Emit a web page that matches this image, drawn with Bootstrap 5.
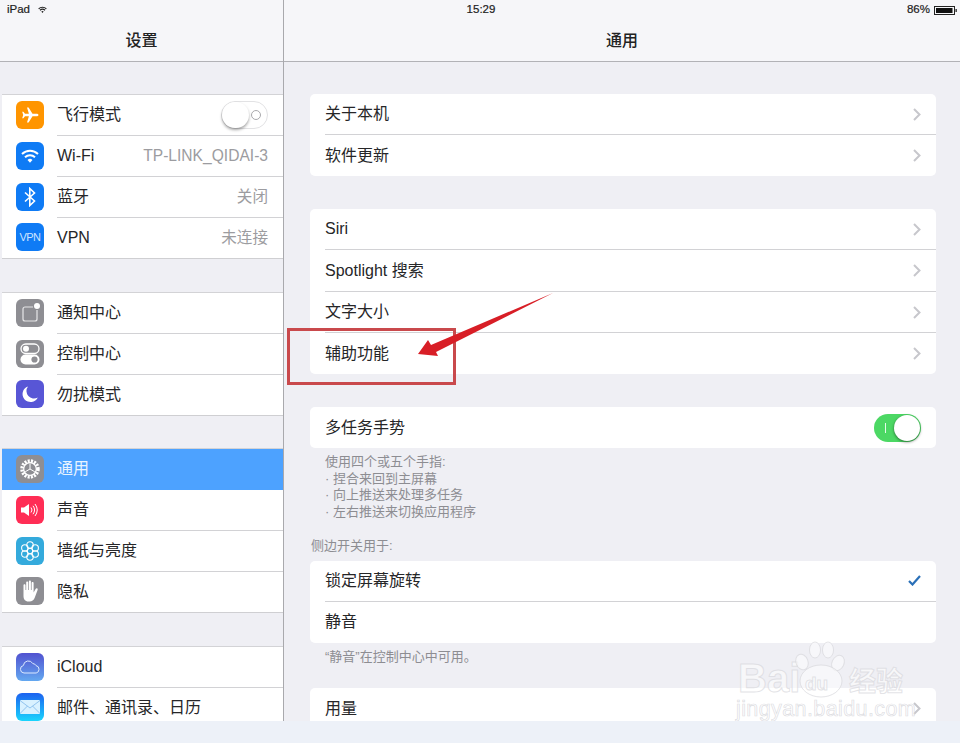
<!DOCTYPE html>
<html lang="zh-CN">
<head>
<meta charset="UTF-8">
<title>设置 - 通用</title>
<link href="https://cdn.jsdelivr.net/npm/bootstrap@5.3.0/dist/css/bootstrap.min.css" rel="stylesheet">
<style>
body { background: #edf1f8; font-family: "Liberation Sans", "Noto Sans CJK SC", sans-serif; color: #262628; overflow: hidden; }
.ipad { height: 721px; background: #efeff4; overflow: hidden; }
.status-bar { height: 20px; font-size: 11.5px; color: #222; padding: 0 3px 0 7px; z-index: 3; -webkit-text-stroke: .2px #222; }
.status-mid { left: 2px; right: 0; text-align: center; }
.side-pane { width: 284px; border-right: 1px solid #a9a9ad; }
.nav-head { height: 62px; background: #f6f6f9; border-bottom: 1px solid #b2b2b6; padding-top: 20px; font-size: 16px; font-weight: 500; color: #222; }
.side-list { padding: 0 0 0 2px; }
.set-group { margin-top: 32px; margin-bottom: 33px; background: #fff; border-top: 1px solid #d3d3d6; border-bottom: 1px solid #cfcfd2; }
.tight-gap { margin-bottom: 32px; }
.set-row { height: 41px; font-size: 16px; padding-left: 14px; }
.set-row:last-child { height: 40px; }
.set-icon { width: 28px; height: 28px; border-radius: 6px; flex: none; margin: 0 13px 2px 0; }
.vpn-icon { background: #0f7bf5; color: #cfe5ff; font-size: 11px; letter-spacing: -.5px; }
.set-text { height: 100%; border-bottom: 1px solid #d2d2d5; padding: 0 15px 1px 0; }
.set-row:last-child .set-text { border-bottom: 0; }
.set-val { color: #9c9ca0; font-size: 15.6px; }
.set-row.active-row { background: #4da2ff; color: #e8f3ff; }
.set-row.active-row .set-text { border-bottom: 0; }
.toggle-off, .toggle-on { width: 47px; height: 28px; border-radius: 14px; }
.toggle-off { border: 1px solid #e2e2e4; background: #fff; }
.toggle-off i { position: absolute; left: 0; top: 0; width: 27px; height: 26px; border-radius: 13px; background: #fff; box-shadow: 0 2px 3px rgba(0,0,0,.35); }
.toggle-off b { position: absolute; right: 6px; top: 8px; width: 10px; height: 10px; border-radius: 50%; border: 1px solid #a9a9ac; }
.toggle-on { background: #4cd864; }
.toggle-on i { position: absolute; right: 1px; top: 1px; width: 26px; height: 26px; border-radius: 50%; background: #fff; box-shadow: 0 1px 3px rgba(0,0,0,.5); }
.toggle-on b { position: absolute; left: 11px; top: 9px; width: 1px; height: 10px; background: #e6fbe9; }
.main-list { padding: 32px 24px 0 26px; }
.card-group-ios { background: #fff; border-radius: 5px; margin-bottom: 33px; }
.ios-row { height: 41px; font-size: 16px; padding-left: 15px; }
.ios-row-tall { height: 42px; }
.ios-body { height: 100%; padding-right: 15px; border-bottom: 1px solid #d2d2d5; }
.ios-row:last-child .ios-body { border-bottom: 0; }
.foot-note { font-size: 13px; line-height: 16.7px; color: #8d8d92; padding-left: 15px; margin: -32px 0 0; padding-top: 5px; }
.side-label { font-size: 13px; line-height: 16.7px; color: #8d8d92; margin: 17px 0 6px 1px; }
.tail-note { margin-top: -27px; margin-bottom: 23px; padding-top: 0; }
.red-box { left: 287px; top: 328px; width: 169px; height: 57px; border: 3px solid #c9494c; z-index: 4; }
.arrow-layer { left: 400px; top: 280px; z-index: 5; }
.water { left: 735px; top: 640px; width: 180px; height: 80px; z-index: 6; color: rgba(255,255,255,.5); -webkit-text-stroke: 1px rgba(215,215,220,.7); }
.water-bai { left: 3px; top: 17px; font: 700 40px/42px "Liberation Sans", sans-serif; }
.water-paw { left: 58px; top: 0; }
.water-du { left: 70px; top: 33px; font: 700 19px/22px "Liberation Sans", sans-serif; }
.water-jy { left: 114px; top: 24px; font: 700 27px/32px "Noto Sans CJK SC", sans-serif; }
.water-url { left: 1px; top: 59px; font: 400 21.5px/20px "Liberation Sans", sans-serif; letter-spacing: .4px; -webkit-text-stroke: .7px rgba(210,210,215,.75); }
</style>
</head>
<body>
<div class="ipad position-relative d-flex">

  <div class="status-bar position-absolute top-0 start-0 w-100 d-flex align-items-center justify-content-between">
    <div class="d-flex align-items-center gap-2">
      <span>iPad</span>
      <svg width="9" height="8" viewBox="0 0 10 8" fill="none" stroke="#222" stroke-width="1.3"><path d="M.7 2.800a6 6 0 0 1 8.600 0M2.200 4.300a4 4 0 0 1 5.600 0"/><path d="M3.700 5.800a1.900 1.900 0 0 1 2.600 0L5 7.300z" fill="#222" stroke="none"/></svg>
    </div>
    <div class="status-mid position-absolute">15:29</div>
    <div class="d-flex align-items-center gap-1">
      <span>86%</span>
      <svg width="23" height="9" viewBox="0 0 23 9"><rect x=".5" y=".5" width="20" height="8" fill="none" stroke="#222"/><rect x="2" y="2" width="16.500" height="5" fill="#111"/><rect x="21.500" y="3" width="1.300" height="3" fill="#222"/></svg>
    </div>
  </div>

  <aside class="side-pane flex-shrink-0 d-flex flex-column">
    <div class="nav-head flex-shrink-0 d-flex align-items-center justify-content-center">设置</div>
    <div class="side-list">
      <div class="set-group">
        <div class="set-row d-flex align-items-center">
          <span class="set-icon d-flex align-items-center justify-content-center" style="background:#ff9500">
            <svg width="20" height="20" viewBox="0 0 20 20" fill="#fff"><path d="M18.500 10c0-.8-1-1.300-2.200-1.300h-3.800L8.600 2.500H7l1.900 6.200H5L3.400 6.800H2.200L3.200 10l-1 3.200h1.200L5 11.300h3.900L7 17.500h1.600l3.900-6.200h3.800c1.200 0 2.200-.5 2.200-1.300z"/></svg>
          </span>
          <div class="set-text flex-fill d-flex align-items-center justify-content-between">
            <span>飞行模式</span>
            <span class="toggle-off position-relative d-block"><i></i><b></b></span>
          </div>
        </div>
        <div class="set-row d-flex align-items-center">
          <span class="set-icon d-flex align-items-center justify-content-center" style="background:#0f7bf5">
            <svg width="20" height="16" viewBox="0 0 20 16" fill="none" stroke="#fff" stroke-width="2"><path d="M2 6a11.500 11.500 0 0 1 16 0M5 9.200a7.200 7.200 0 0 1 10 0"/><path d="M7.500 12a3.600 3.600 0 0 1 5 0L10 14.800z" fill="#fff" stroke="none"/></svg>
          </span>
          <div class="set-text flex-fill d-flex align-items-center justify-content-between">
            <span>Wi-Fi</span><span class="set-val">TP-LINK_QIDAI-3</span>
          </div>
        </div>
        <div class="set-row d-flex align-items-center">
          <span class="set-icon d-flex align-items-center justify-content-center" style="background:#0f7bf5">
            <svg width="12" height="20" viewBox="0 0 12 20" fill="none" stroke="#fff" stroke-width="1.600"><path d="M1 5.500 10.500 14 5.800 18.500v-17L10.500 6 1 14.500"/></svg>
          </span>
          <div class="set-text flex-fill d-flex align-items-center justify-content-between">
            <span>蓝牙</span><span class="set-val">关闭</span>
          </div>
        </div>
        <div class="set-row d-flex align-items-center">
          <span class="set-icon vpn-icon d-flex align-items-center justify-content-center">VPN</span>
          <div class="set-text flex-fill d-flex align-items-center justify-content-between">
            <span>VPN</span><span class="set-val">未连接</span>
          </div>
        </div>
      </div>

      <div class="set-group tight-gap">
        <div class="set-row d-flex align-items-center">
          <span class="set-icon d-flex align-items-center justify-content-center" style="background:#8e8e93">
            <svg width="24" height="24" viewBox="0 0 24 24" fill="none"><path d="M15 6H7a2 2 0 0 0-2 2v10a2 2 0 0 0 2 2h10a2 2 0 0 0 2-2V9" stroke="#e6e6e8" stroke-width="1.200"/><circle cx="19" cy="5" r="3" fill="#fff"/></svg>
          </span>
          <div class="set-text flex-fill d-flex align-items-center"><span>通知中心</span></div>
        </div>
        <div class="set-row d-flex align-items-center">
          <span class="set-icon d-flex align-items-center justify-content-center" style="background:#8e8e93">
            <svg width="22" height="24" viewBox="0 0 22 24"><rect x="2" y="2" width="18" height="9.500" rx="4.700" fill="none" stroke="#fff" stroke-width="1.300"/><circle cx="7" cy="6.700" r="3" fill="#fff"/><rect x="1.500" y="12.500" width="19" height="10" rx="5" fill="#fff"/><circle cx="15.500" cy="17.500" r="3.100" fill="#8e8e93"/></svg>
          </span>
          <div class="set-text flex-fill d-flex align-items-center"><span>控制中心</span></div>
        </div>
        <div class="set-row d-flex align-items-center">
          <span class="set-icon d-flex align-items-center justify-content-center" style="background:#5856d6">
            <svg width="18" height="18" viewBox="0 0 18 18" fill="#fff"><path d="M7 1.500a8 8 0 1 0 9.800 11A7.500 7.500 0 0 1 7 1.500z"/></svg>
          </span>
          <div class="set-text flex-fill d-flex align-items-center"><span>勿扰模式</span></div>
        </div>
      </div>

      <div class="set-group">
        <div class="set-row active-row d-flex align-items-center">
          <span class="set-icon d-flex align-items-center justify-content-center" style="background:#8e8e93">
            <svg width="22" height="22" viewBox="0 0 22 22" fill="none" stroke="#fff"><circle cx="11" cy="11" r="8" stroke-width="3.500" stroke-dasharray="2 1.200"/><circle cx="11" cy="11" r="6.300" stroke-width="1.200"/><path d="M11 11V5.500M11 11l4.800 2.800M11 11l-4.800 2.800" stroke-width="1"/></svg>
          </span>
          <div class="set-text flex-fill d-flex align-items-center"><span>通用</span></div>
        </div>
        <div class="set-row d-flex align-items-center">
          <span class="set-icon d-flex align-items-center justify-content-center" style="background:#ff2d55">
            <svg width="20" height="16" viewBox="0 0 20 16" fill="none" stroke="#fff"><path d="M1 5.500h3L9 2v12L4 10.500H1z" fill="#fff" stroke="none"/><path d="M11 5.500a4 4 0 0 1 0 5M13 3.800a7 7 0 0 1 0 8.400M15 2a10 10 0 0 1 0 12" stroke-width="1"/></svg>
          </span>
          <div class="set-text flex-fill d-flex align-items-center"><span>声音</span></div>
        </div>
        <div class="set-row d-flex align-items-center">
          <span class="set-icon d-flex align-items-center justify-content-center" style="background:#34aadc">
            <svg width="22" height="22" viewBox="0 0 22 22" fill="none" stroke="#fff" stroke-width="1.100"><circle cx="11" cy="11" r="2.800"/><circle cx="11" cy="5" r="3.200"/><circle cx="11" cy="17" r="3.200"/><circle cx="5.800" cy="8" r="3.200"/><circle cx="16.200" cy="8" r="3.200"/><circle cx="5.800" cy="14" r="3.200"/><circle cx="16.200" cy="14" r="3.200"/></svg>
          </span>
          <div class="set-text flex-fill d-flex align-items-center"><span>墙纸与亮度</span></div>
        </div>
        <div class="set-row d-flex align-items-center">
          <span class="set-icon d-flex align-items-center justify-content-center" style="background:#8e8e93">
            <svg width="20" height="24" viewBox="0 0 20 24" fill="#fff"><path d="M3.500 13V6.200c0-1.400 2-1.400 2 0V11h.7V3.500c0-1.400 2-1.400 2 0V11h.7V2.500c0-1.400 2-1.400 2 0V11h.7V4c0-1.400 2-1.400 2 0v9.500l2-3.500c.8-1.300 2.600-.5 2 1l-3 8c-.9 2.300-2.600 3.500-5 3.500H8.500C5 22.500 3.500 20 3.500 17z"/></svg>
          </span>
          <div class="set-text flex-fill d-flex align-items-center"><span>隐私</span></div>
        </div>
      </div>

      <div class="set-group">
        <div class="set-row d-flex align-items-center">
          <span class="set-icon d-flex align-items-center justify-content-center" style="background:linear-gradient(#5152d0,#64a8f0)">
            <svg width="22" height="14" viewBox="0 0 22 14" fill="none" stroke="#dbe9ff" stroke-width="1"><path d="M5 13a3.800 3.800 0 0 1-.6-7.500A5 5 0 0 1 13.800 3.600 3.500 3.500 0 0 1 17 5.600 3.800 3.800 0 0 1 17.200 13z"/></svg>
          </span>
          <div class="set-text flex-fill d-flex align-items-center"><span>iCloud</span></div>
        </div>
        <div class="set-row d-flex align-items-center">
          <span class="set-icon d-flex align-items-center justify-content-center" style="background:linear-gradient(#1d62f0,#1ad5fd)">
            <svg width="20" height="14" viewBox="0 0 20 14"><rect width="20" height="14" rx="1" fill="#d9f1ff"/><path d="M0 .5 10 8 20 .5M0 13.500 7.500 6M20 13.500 12.500 6" fill="none" stroke="#7fb8ea" stroke-width=".8"/></svg>
          </span>
          <div class="set-text flex-fill d-flex align-items-center"><span>邮件、通讯录、日历</span></div>
        </div>
      </div>
    </div>
  </aside>

  <main class="flex-fill d-flex flex-column">
    <div class="nav-head flex-shrink-0 d-flex align-items-center justify-content-center">通用</div>
    <div class="main-list">
      <div class="card-group-ios">
        <div class="ios-row"><div class="ios-body d-flex align-items-center justify-content-between"><span>关于本机</span><svg width="8" height="13" viewBox="0 0 8 13" fill="none" stroke="#c7c7cc" stroke-width="2"><path d="m1 1 5.500 5.500L1 12"/></svg></div></div>
        <div class="ios-row"><div class="ios-body d-flex align-items-center justify-content-between"><span>软件更新</span><svg width="8" height="13" viewBox="0 0 8 13" fill="none" stroke="#c7c7cc" stroke-width="2"><path d="m1 1 5.500 5.500L1 12"/></svg></div></div>
      </div>
      <div class="card-group-ios">
        <div class="ios-row"><div class="ios-body d-flex align-items-center justify-content-between"><span>Siri</span><svg width="8" height="13" viewBox="0 0 8 13" fill="none" stroke="#c7c7cc" stroke-width="2"><path d="m1 1 5.500 5.500L1 12"/></svg></div></div>
        <div class="ios-row ios-row-tall"><div class="ios-body d-flex align-items-center justify-content-between"><span>Spotlight 搜索</span><svg width="8" height="13" viewBox="0 0 8 13" fill="none" stroke="#c7c7cc" stroke-width="2"><path d="m1 1 5.500 5.500L1 12"/></svg></div></div>
        <div class="ios-row"><div class="ios-body d-flex align-items-center justify-content-between"><span>文字大小</span><svg width="8" height="13" viewBox="0 0 8 13" fill="none" stroke="#c7c7cc" stroke-width="2"><path d="m1 1 5.500 5.500L1 12"/></svg></div></div>
        <div class="ios-row"><div class="ios-body d-flex align-items-center justify-content-between"><span>辅助功能</span><svg width="8" height="13" viewBox="0 0 8 13" fill="none" stroke="#c7c7cc" stroke-width="2"><path d="m1 1 5.500 5.500L1 12"/></svg></div></div>
      </div>
      <div class="card-group-ios">
        <div class="ios-row"><div class="ios-body d-flex align-items-center justify-content-between"><span>多任务手势</span><span class="toggle-on position-relative d-block"><b></b><i></i></span></div></div>
      </div>
      <p class="foot-note">使用四个或五个手指:<br>· 捏合来回到主屏幕<br>· 向上推送来处理多任务<br>· 左右推送来切换应用程序</p>
      <p class="side-label">侧边开关用于:</p>
      <div class="card-group-ios">
        <div class="ios-row"><div class="ios-body d-flex align-items-center justify-content-between"><span>锁定屏幕旋转</span><svg width="13" height="11" viewBox="0 0 13 11" fill="none" stroke="#2a70b8" stroke-width="2.200"><path d="m1 6 3.500 3.500L12 1"/></svg></div></div>
        <div class="ios-row"><div class="ios-body d-flex align-items-center justify-content-between"><span>静音</span></div></div>
      </div>
      <p class="foot-note tail-note">“静音”在控制中心中可用。</p>
      <div class="card-group-ios">
        <div class="ios-row"><div class="ios-body d-flex align-items-center justify-content-between"><span>用量</span><svg width="8" height="13" viewBox="0 0 8 13" fill="none" stroke="#c7c7cc" stroke-width="2"><path d="m1 1 5.500 5.500L1 12"/></svg></div></div>
      </div>
    </div>
  </main>

  <div class="red-box position-absolute"></div>
  <svg class="arrow-layer position-absolute" width="170" height="90" viewBox="400 280 170 90">
    <path d="M553 293 436 352 438 356 418 354 428 340 431 345z" fill="#d81e26"/>
  </svg>

  <div class="water position-absolute">
    <span class="water-bai position-absolute">Bai</span>
    <svg class="water-paw position-absolute" width="54" height="62" viewBox="0 0 54 62" fill="rgba(255,255,255,.5)" stroke="rgba(215,215,220,.7)"><ellipse cx="9" cy="22" rx="6" ry="8" transform="rotate(-20 9 22)"/><ellipse cx="22" cy="10" rx="5.500" ry="8"/><ellipse cx="35" cy="10" rx="5.500" ry="8"/><ellipse cx="45" cy="23" rx="6" ry="8" transform="rotate(25 45 23)"/><ellipse cx="28" cy="41" rx="21" ry="16"/></svg>
    <span class="water-du position-absolute">du</span>
    <span class="water-jy position-absolute">经验</span>
    <span class="water-url position-absolute">jingyan.baidu.com</span>
  </div>
</div>
</body>
</html>
